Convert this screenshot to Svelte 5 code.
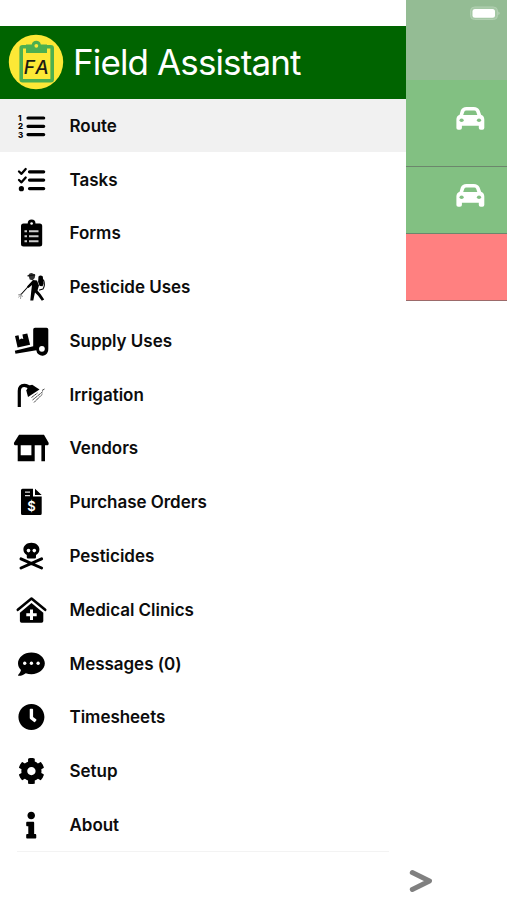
<script>
  const items = [
    ['route', 'Route'], ['tasks', 'Tasks'], ['forms', 'Forms'], ['spray', 'Pesticide Uses'],
    ['supply', 'Supply Uses'], ['water', 'Irrigation'], ['store', 'Vendors'], ['invoice', 'Purchase Orders'],
    ['skull', 'Pesticides'], ['clinic', 'Medical Clinics'], ['chat', 'Messages (0)'], ['clock', 'Timesheets'],
    ['cog', 'Setup'], ['info', 'About']
  ];
</script>

{#snippet icon(name)}
  <svg class="icon" viewBox="0 0 40 40" width="40" height="40">
    {#if name === 'route'}
      <path class="bar" d="M17 12H32.700M17 20.300H32.700M17 28.600H32.700" />
      <g class="nums"><text x="7" y="14.600">1</text><text x="7" y="23.200">2</text><text x="7" y="31.900">3</text></g>
    {:else if name === 'tasks'}
      <path class="bar" d="M18.500 11.800H32.700M18.500 20.100H32.700M18.500 28.600H32.700" />
      <path class="ln" stroke-width="2.300" d="M8 11.500l2.500 2.300 4.200-4.800M8 20l2.500 2.300 4.200-4.800" />
      <circle cx="10.400" cy="28.700" r="2.600" />
    {:else if name === 'forms'}
      <path d="M12.500 10.500h4.200a3.900 3.900 0 0 1 7.800 0h4.200q2.500 0 2.500 2.500v18q0 2.500-2.500 2.500H12.500Q10 33.500 10 31V13q0-2.500 2.500-2.500z" />
      <circle cx="20.600" cy="10.500" r="1.300" fill="#fff" />
      <path stroke="#ccc" stroke-width="1.900" fill="none" d="M13.500 18.300h2.500M18 18.300h9.500M13.500 23.300h2.500M18 23.300h9.500M13.500 28.300h2.500M18 28.300h9.500" />
    {:else if name === 'spray'}
      <path d="M17.300 8.200q1.200-2.500 4-2l3 1.500-.6 3.200-2 2.300-3-.6-.8-2.800z" fill="#333" />
      <path d="M16.500 8.800l7.500-1" stroke="#111" stroke-width="1.200" />
      <path d="M22 13l4 .5 2 5-1.500 5 3 3.500 3.700 5.500-2.400 1.300-3.800-5.300-3-3-.8 3.500-.9 4.500h-3l.9-9 .8-6.500-3.500 3-1.500-1.500z" />
      <path d="M27.500 9.500q2-2.200 4.300 0l.8 7-1 2.700-3-.3-1.500-4z" />
      <path class="ln" stroke-width="1.100" d="M19 17.500L10 27.500M32.500 13q2 5-.5 9l-3.500 1" />
      <path stroke="#888" stroke-width=".8" fill="none" d="M10 27l-3 1M10 27l-2.500 3.500M10 27l-.5 5M10 27l1.500 3" />
    {:else if name === 'supply'}
      <path d="M24 6.700h11.500q1.800 0 1.800 1.800V28a6 6 0 0 1-12 1.300L4.500 32.800 3.800 29.700 22.200 25.200V8.500q0-1.800 1.800-1.800z" />
      <circle cx="30.900" cy="27.800" r="2.900" fill="#fff" />
      <path d="M4 15l3.500-.7.900 4.400 1.900-1.200 2 .4-.9-4.300 4.900-1 2.800 11.200-12.500 2.700z" />
    {:else if name === 'water'}
      <path class="ln pipe" stroke-width="3.200" d="M8.300 32V16Q8.300 10.400 13.300 10.300q3.700 0 6 3.200" />
      <path d="M18 10.500l3.200-.8 7.300 4.800-11.500 7.500-1.700-6.500z" />
      <path stroke="#444" stroke-width="1" stroke-dasharray="3 .4" d="M20.500 22.500l6-4.500M31 15.500l2.500-1.500M21.500 25l10.500-8.500M23 27.500l8.500-8.500" fill="none" />
    {:else if name === 'store'}
      <path d="M8 6.700H33l4.600 8q.5 2.600-1.900 2.600H34V33.300h-3.600V17.300H23.700V33.300H6.700V17.300H5q-2.500 0-2-2.600zM9.700 17.300V27.300H20.400V17.300z" fill-rule="evenodd" />
    {:else if name === 'invoice'}
      <path d="M11.500 6.700H22V14.500h8.700V31.500q0 1.500-1.500 1.500H11.500Q10 33 10 31.500V8.200q0-1.500 1.500-1.500zM24 6.700l6.700 6.300H24z" />
      <path d="M14 10.200h5M14 13.600h5" stroke="#ddd" stroke-width="1.200" />
      <text class="dollar" x="20.400" y="28.800">$</text>
    {:else if name === 'skull'}
      <path d="M20.400 6.800c4.700 0 8 2.900 8 6.700 0 2.500-1.400 4.300-3.400 5.500v2.200q0 1.200-1.200 1.200h-6.800q-1.200 0-1.200-1.200V19c-2-1.200-3.400-3-3.400-5.500 0-3.800 3.300-6.700 8-6.700z" />
      <circle cx="17.500" cy="14.600" r="1.800" fill="#fff" /><circle cx="23.300" cy="14.600" r="1.800" fill="#fff" />
      <path class="ln" stroke-width="3" d="M10 22.800L30.600 32M30.600 22.800L10 32" />
    {:else if name === 'clinic'}
      <path class="ln" stroke-width="2.600" d="M6.800 19.800L20.500 8.500 34.200 19.800" />
      <path d="M20.500 13l11.800 9.700V31q0 1.700-1.700 1.700H10.600Q8.900 32.700 8.900 31V22.700z" />
      <path d="M20.500 19.500V30M15.300 24.800H25.700" stroke="#fff" stroke-width="3" />
    {:else}
      <g transform="translate({name === 'info' ? 15.2 : 7} 6.700) scale(.0524)">
        {#if name === 'chat'}
          <path d="M256 32C114.600 32 0 125.100 0 240c0 49.600 21.400 95 57 130.700C44.500 421.100 2.700 466 2.200 466.500c-2.200 2.300-2.800 5.700-1.500 8.700S4.800 480 8 480c66.300 0 116-31.800 140.600-51.400 32.700 12.300 69 19.400 107.400 19.400 141.400 0 256-93.100 256-208S397.400 32 256 32z" />
          <g fill="#fff"><circle cx="128" cy="240" r="32" /><circle cx="256" cy="240" r="32" /><circle cx="384" cy="240" r="32" /></g>
        {:else if name === 'clock'}
          <path d="M256 8C119 8 8 119 8 256S119 504 256 504 504 393 504 256 393 8 256 8Zm92.490 313l-20 25a16 16 0 0 1-22.490 2.500l-67-49.720a40 40 0 0 1-15-31.230V112a16 16 0 0 1 16-16h32a16 16 0 0 1 16 16V256l58 42.500A16 16 0 0 1 348.490 321Z" />
        {:else if name === 'cog'}
          <path d="M487.400 315.700l-42.600-24.600c4.300-23.200 4.300-47 0-70.200l42.600-24.600c4.900-2.800 7.100-8.600 5.500-14-11.100-35.600-30-67.800-54.700-94.600-3.800-4.100-10-5.100-14.800-2.300L380.800 110c-17.900-15.400-38.500-27.300-60.800-35.100V25.800c0-5.600-3.900-10.500-9.400-11.700-36.700-8.200-74.300-7.800-109.200 0-5.500 1.200-9.400 6.100-9.400 11.700V75c-22.200 7.900-42.800 19.800-60.800 35.100L88.700 85.500c-4.900-2.800-11-1.900-14.800 2.300-24.700 26.700-43.600 58.900-54.700 94.600-1.700 5.400.6 11.200 5.500 14L67.300 221c-4.300 23.200-4.300 47 0 70.200l-42.600 24.600c-4.900 2.800-7.100 8.600-5.500 14 11.100 35.600 30 67.800 54.700 94.600 3.800 4.100 10 5.100 14.800 2.300l42.600-24.600c17.900 15.400 38.500 27.300 60.800 35.100v49.200c0 5.600 3.900 10.500 9.400 11.700 36.700 8.200 74.300 7.800 109.200 0 5.500-1.200 9.400-6.100 9.400-11.700v-49.200c22.200-7.900 42.800-19.800 60.800-35.100l42.600 24.600c4.900 2.800 11 1.900 14.800-2.300 24.700-26.700 43.600-58.900 54.700-94.600 1.500-5.500-.7-11.300-5.600-14.100zM256 336c-44.100 0-80-35.900-80-80s35.900-80 80-80 80 35.900 80 80-35.900 80-80 80z" />
        {:else}
          <path d="M20 424.229h20V279.771H20c-11.046 0-20-8.954-20-20V212c0-11.046 8.954-20 20-20h112c11.046 0 20 8.954 20 20v212.229h20c11.046 0 20 8.954 20 20V492c0 11.046-8.954 20-20 20H20c-11.046 0-20-8.954-20-20v-47.771c0-11.046 8.954-20 20-20zM96 0C56.235 0 24 32.235 24 72s32.235 72 72 72 72-32.235 72-72S135.764 0 96 0z" />
        {/if}
      </g>
    {/if}
  </svg>
{/snippet}

{#snippet car()}
  <svg class="car" width="29" height="23" viewBox="0 0 29 23">
    <path fill="#fff" fill-rule="evenodd" d="M10.500 0h7.200c3 0 4.900 1.200 5.900 3.600l1.500 4.200c2.100.8 3.200 2.500 3.200 4.700V21q0 1.800-1.800 1.800h-1.800q-1.900 0-1.900-1.800v-2.200H5.900V21q0 1.800-1.900 1.800H2.200Q.4 22.800.4 21v-8.500c0-2.200 1.100-3.900 3.200-4.700l1.200-4.200C5.800 1.200 7.500 0 10.500 0zM10.300 3.500q-1.500 0-2 1.300L7.200 7.900h14.100L20.200 4.800q-.5-1.300-2-1.300z" />
    <g fill="#82c082"><ellipse cx="5.600" cy="13.300" rx="2.100" ry="1.700" /><ellipse cx="23" cy="13.300" rx="2.100" ry="1.700" /></g>
  </svg>
{/snippet}

<main>
  <nav>
    <header>
      <svg class="logo" width="56" height="56" viewBox="0 0 56 56">
        <circle cx="28" cy="28" r="27.200" fill="#fde836" />
        <rect x="13.200" y="12.800" width="31" height="34" rx="1.500" fill="none" stroke="#4caf50" stroke-width="3.600" />
        <path d="M18 10.500h5.800a4.600 4.600 0 0 1 9 0H39V19H18z" fill="#4caf50" />
        <circle cx="28.300" cy="11.800" r="1.900" fill="#fde836" />
        <text x="15.800" y="40.300">F</text><text x="27.300" y="40.300">A</text>
      </svg>
      <h1>Field Assistant</h1>
    </header>
    <ul>
      {#each items as [name, label], i}
        <li class:active={i === 0}>{@render icon(name)}<span>{label}</span></li>
      {/each}
    </ul>
    <div class="rule"></div>
  </nav>
  <aside>
    <div class="status">
      <svg width="32" height="16" viewBox="0 0 32 16">
        <rect x="1.500" y="1" width="27" height="12.500" rx="4" fill="#a5c8a5" stroke="#b2d0b2" />
        <rect x="3.500" y="3" width="22.500" height="8.800" rx="2.500" fill="#fff" />
        <path d="M29.500 5.500q2 1.700 0 3.600z" fill="#c4dbc4" />
      </svg>
    </div>
    <div class="stop first">{@render car()}</div>
    <div class="stop">{@render car()}</div>
    <div class="stop missed"></div>
    <div class="next">
      <svg width="26" height="28" viewBox="0 0 26 28"><path d="M4.300 5.500L21.500 14 4.300 22.500" fill="none" stroke="#808080" stroke-width="5" stroke-linecap="round" stroke-linejoin="round" /></svg>
    </div>
  </aside>
</main>

<style>
  :global(body) { margin: 0; background: #fff; }
  main { display: flex; width: 507px; height: 900px; overflow: hidden; font-family: Inter, "Liberation Sans", sans-serif; }
  nav { width: 406px; padding-top: 25.500px; box-sizing: border-box; flex: none; }
  header { height: 73px; background: #006400; display: flex; align-items: center; box-sizing: border-box; padding-left: 8px; }
  .logo { flex: none; }
  .logo text { font: italic 500 19px Inter, sans-serif; fill: #1c1c14; }
  h1 { margin: 0 0 0 9px; color: #fff; font-size: 35px; font-weight: 400; white-space: nowrap; letter-spacing: -.88px; }
  ul { list-style: none; margin: 0; padding: 0; }
  li { height: 53.770px; display: flex; align-items: center; box-sizing: border-box; padding: 1px 0 0 11px; font-size: 17px; font-weight: 600; letter-spacing: -.03px; color: #0c0c0c; }
  li.active { background: #f1f1f1; }
  li span { margin-left: 18.500px; white-space: nowrap; }
  .icon { flex: none; fill: #000; }
  .bar { fill: none; stroke: #000; stroke-width: 3.200; stroke-linecap: round; }
  .ln { fill: none; stroke: #000; stroke-linecap: round; stroke-linejoin: round; }
  .pipe { stroke-linecap: butt; }
  .nums text { font: 800 8px Inter, sans-serif; }
  .dollar { font: 600 13px Inter, sans-serif; fill: #fff; text-anchor: middle; }
  .rule { height: 1px; margin: 0 17px; background: #f3f3f3; }
  aside { flex: 1; display: flex; flex-direction: column; }
  .status { height: 80px; background: #94bc94; box-sizing: border-box; padding: 6px 0 0 63px; }
  .stop { height: 67.300px; box-sizing: border-box; border-bottom: 1px solid #6c866c; background: #82c082; padding: 17px 0 0 50px; }
  .stop.first { height: 86.800px; padding-top: 27px; }
  .stop.missed { background: #ff8080; border-color: #9c6a6a; }
  .car { display: block; }
  .next { margin-top: auto; padding: 0 0 5px 2px; height: 28px; }
</style>
